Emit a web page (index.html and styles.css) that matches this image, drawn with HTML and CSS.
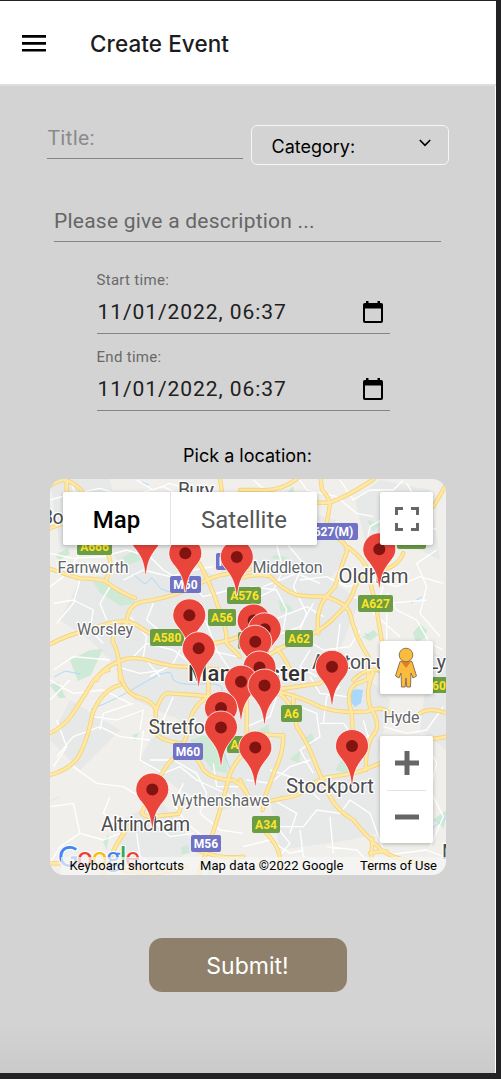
FILE: index.html
```html
<!DOCTYPE html>
<html lang="en">
<head>
<meta charset="utf-8">
<title>Create Event</title>
<link rel="stylesheet" href="styles.css">
</head>
<body>
<div class="app">
  <header class="topbar">
    <svg class="menu" width="24" height="17" viewBox="0 0 24 17"><path d="M0 1.4h24M0 8.4h24M0 15.2h24"/></svg>
    <h1 class="heading">Create Event</h1>
  </header>
  <main class="form">
    <div class="row">
      <div class="field title"><span>Title:</span></div>
      <div class="select"><span>Category:</span><svg width="12" height="8" viewBox="0 0 12 8"><path d="M.8 1 6 6.3 11.2 1"/></svg></div>
    </div>
    <div class="field description"><span>Please give a description ...</span></div>
    <div class="datetime">
      <label>Start time:</label>
      <div class="value"><span><b>11/01/2022,</b> <b>06:37</b></span><svg width="20" height="23" viewBox="0 0 20 23"><path class="ink" fill-rule="evenodd" d="M3 0h2.5v2h9V0H17v2h1.2Q20 2 20 3.800V20.200Q20 22 18.200 22H1.800Q0 22 0 20.200V3.800Q0 2 1.800 2H3zM2 7.500V20h16V7.500z"/></svg></div>
    </div>
    <div class="datetime">
      <label>End time:</label>
      <div class="value"><span><b>11/01/2022,</b> <b>06:37</b></span><svg width="20" height="23" viewBox="0 0 20 23"><path class="ink" fill-rule="evenodd" d="M3 0h2.5v2h9V0H17v2h1.2Q20 2 20 3.800V20.200Q20 22 18.200 22H1.800Q0 22 0 20.200V3.800Q0 2 1.800 2H3zM2 7.500V20h16V7.500z"/></svg></div>
    </div>
    <p class="pick">Pick a location:</p>
    <div class="map">
      <svg class="canvas" width="396" height="396" viewBox="50 479 396 396">
        <defs>
          <g id="pin"><path d="M-.6 38.500C-2 25-5 20-10.500 12.800-13.500 9-16.500 5.500-16.500 0a16.500 16.500 0 0 1 33 0C16.500 5.500 13.500 9 10.500 12.800 5 20 2 25 .6 38.500z"/><circle r="6"/></g>
          <g id="minor">
            <g transform="translate(40 470) scale(.33333)">
              <path d="M30 90 100 70 180 55 260 80 370 50 430 80M90 30 120 110 80 180 110 230M30 250 100 265 190 260 260 240 330 260 370 300 420 330M120 330 100 400 50 460M40 400 100 390 160 420 150 480 190 520M250 330 310 300 390 320 460 300 520 290M340 400 320 450 380 500 430 500M270 440 320 500 310 560 360 620M280 560 320 520 400 540 480 600M40 600 100 560 210 570M230 590 300 610 370 600M470 400 500 460 530 540 570 600M290 30 340 60 390 40 480 70"/>
              <path d="M210 350 180 400 200 450M430 320 490 380 570 360M30 350 70 320 120 250M400 450 460 530 590 560M330 620 400 580 420 540"/>
            </g>
            <g transform="translate(240 470) scale(.33333)">
              <path d="M40 30 100 80 180 90M180 30 200 60 290 80 350 130 400 140M300 30 340 90 390 60 460 60 490 30M110 225 130 300 100 360 60 380M30 350 110 360 140 420 130 480M140 220 190 280 160 350 200 430 180 480M180 330 260 320 320 350 400 330 470 350 540 320 610 340M440 370 470 420 530 450 570 520 610 540M500 40 530 90 500 130 590 180M360 480 330 530 250 540 200 510M210 540 180 590 230 620M30 390 100 450 200 410 250 440M440 430 440 510M300 460 290 540 320 570M590 240 530 280 560 350 540 430 600 500"/>
              <path d="M70 350 170 310 240 340M380 220 390 170 440 140 530 180M100 500 180 470 220 400M330 380 440 400 560 390M430 350 400 430 480 500"/>
            </g>
            <g transform="translate(40 670) scale(.33333)">
              <path d="M30 30 100 70 190 60 270 100M50 260 100 200 180 170 240 200 330 210M160 140 230 150 310 120 300 180M100 290 170 340 250 350 300 380M30 410 100 400 120 490 190 510 240 490M210 380 190 430 250 480M310 180 300 270 370 310 420 290 470 330 600 390M330 270 400 270 470 310 500 370 480 430 540 480 610 490M430 340 400 400 440 460 490 500M350 460 390 500 460 490M120 490 60 530 30 580M90 30 30 90M400 80 360 170 420 190 500 160M50 150 80 230 40 290M520 280 530 350 610 350M290 490 300 560 380 600M180 180 190 130 280 100"/>
            </g>
            <g transform="translate(240 670) scale(.33333)">
              <path d="M110 80 90 140 20 170M180 110 230 130 240 200 180 240 220 310M240 160 310 160 350 210 410 190M300 50 260 80 250 160M370 150 390 220M230 420 190 470 110 470 150 520 100 580M230 420 300 430 330 390 390 430 430 540M180 480 190 560 290 590M270 440 280 550M260 530 350 540 400 590M100 390 170 430 150 490M10 530 90 510 150 550 190 540M90 300 180 330 240 390M560 220 590 280 570 360 610 440 570 530M430 170 500 190 560 180 610 110M440 555 560 540 610 560M20 330 90 340 150 290 210 270M210 20 240 70 320 80M480 560 530 600"/>
            </g>
          </g>
          <g id="major">
            <g transform="translate(40 470) scale(.33333)">
              <path d="M30 48Q55 28 80 30L80 70M76 30Q110 40 130 70M30 175 80 155M540 25 548 80M185 220Q215 260 212 295L198 330M30 296Q80 315 120 325 190 325 205 340 235 365 285 384M630 298 570 310Q540 315 520 322 480 338 440 360 380 385 310 395 262 402 260 460 215 485 218 515 240 550 240 630M30 523Q90 490 150 480 240 440 285 462 350 510 430 520 510 532 600 500M170 630Q185 590 260 566 300 560 340 575 400 592 440 590L540 600M478 280Q520 360 530 400 560 460 560 520L600 560"/>
            </g>
            <g transform="translate(240 470) scale(.33333)">
              <path d="M0 60 60 60Q120 65 170 27M242 27 246 60Q275 90 268 115L260 160M230 98H270Q330 75 400 28M260 190Q340 220 315 260 295 315 285 350L260 378Q225 420 235 490M325 232Q375 270 385 305 390 340 405 390L425 510M0 325Q40 310 90 318 120 355 170 375 200 380 258 380 320 400 330 430 345 500 385 560L385 630M490 250Q470 295 420 300 370 300 345 350 335 395 290 435 260 470 210 495L130 530 60 570M110 535Q150 580 160 630M615 50 580 110M340 630Q380 590 420 602"/>
            </g>
            <g transform="translate(40 670) scale(.33333)">
              <path d="M30 190Q80 165 105 120L150 50Q170 10 205 0M30 315Q85 300 112 265 140 220 158 130 185 60 240 45M240 0Q245 60 290 80 350 95 347 130L348 190Q360 210 420 220 475 260 490 300 520 330 580 330 620 355 630 390M347 125Q365 65 390 70L460 75 520 80M505 0V80Q450 110 445 180 430 240 385 280L340 350 305 430Q330 450 360 437L415 432 430 390M630 235Q570 280 560 350 535 440 515 500L475 615M265 470Q220 530 190 610M30 580H70M470 540Q550 570 610 560M250 600 340 612 440 590M610 0V120"/>
            </g>
            <g transform="translate(240 670) scale(.33333)">
              <path d="M0 405Q90 395 125 385 185 380 205 345L260 322Q350 310 370 300L420 280M130 195Q130 250 105 300L75 380 68 420M70 480Q120 530 120 570V600M80 50Q160 80 170 170 205 220 230 290 250 340 270 380 290 420 340 450 380 500 430 545 480 575 560 580M100 60Q180 80 240 110 290 130 380 125 425 105 450 130M540 130Q570 110 620 130M160 75V110M335 125 338 180M333 120Q315 60 350 40 395 30 400 0M400 10Q375 60 390 110 430 170 395 200 375 240 378 300M20 190 130 197M535 205Q570 212 620 200M397 505 392 600M390 550Q430 540 440 545M0 330 30 390M100 60 240 40Q260 30 260 0M20 0V190"/>
            </g>
          </g>
        </defs>
        <rect class="land" x="50" y="479" width="396" height="396"/>
        <path class="urban" d="M50 479 110 479 115 500 180 505 190 560 220 580 230 530 300 510 335 520 350 550 330 580 360 600 340 650 370 680 390 700 378 760 420 790 390 830 350 840 280 850 270 800 220 810 180 790 140 760 150 740 180 720 135 700 110 660 90 640 60 620 80 580 130 570 150 610 110 550 60 550zM355 500 380 480 430 490 440 560 400 540 370 560zM80 770 50 740 70 700 120 730zM430 650 446 660V750L420 730zM120 820 160 800 195 845 160 875 120 860z"/>
        <g class="park">
          <path d="M92 580 120 588 137 603 121 606 100 593zM70 660 90 650 103 649 91 675 78 681zM55 555 68 548 70 554 59 560zM103 842 109 834 107 850zM190 740 205 735 225 748 228 773 212 770zM132 735 139 733 135 741zM50 685 58 682 66 698 59 698zM285 495 293 486 295 500zM413 633 420 624 427 630 425 638 416 642zM278 600 290 606 293 611 281 613zM271 557 277 555 288 558 281 563zM335 770 344 756 350 762 347 774zM289 759 301 750 299 763zM433 820 447 810 444 828zM306 737 312 733 315 742 308 747zM362 637 374 630 378 635 370 641zM122 558 134 550 141 560 128 565zM255 732 269 724 270 744 261 751zM181 847 188 845 190 853 182 855zM214 599 226 614 220 620zM367 520 380 524 373 532zM50 801 62 795 54 800zM206 860 220 865 209 875z"/>
        </g>
        <path class="lake" d="M350 692 356 689 363 690 361 703 355 707 350 701z"/>
        <path class="water" d="M134 575 145 584 152 578 161 589 170 592M142 482 149 485M91 709Q112 702 142 684T172 676 202 684 217 698M54 677 65 671 80 674M292 671 298 678M214 728 232 774M331 699 338 684M61 771 75 761 80 750M365 633 369 637M411 603 422 597M431 829 447 817"/>
        <use href="#minor" class="minor"/>
        <use href="#major" class="casing"/>
        <use href="#major" class="core"/>
        <g class="badge green">
          <rect x="77" y="539" width="35" height="16" rx="2"/><rect x="227" y="587" width="34" height="17" rx="2"/><rect x="208" y="609" width="28" height="17" rx="2"/><rect x="150" y="629" width="34" height="17" rx="2"/><rect x="285" y="630" width="28" height="17" rx="2"/><rect x="358" y="595" width="35" height="17" rx="2"/><rect x="397" y="532" width="29" height="17" rx="2"/><rect x="281" y="705" width="21" height="17" rx="2"/><rect x="227" y="736" width="24" height="17" rx="2"/><rect x="252" y="816" width="28" height="17" rx="2"/><rect x="430" y="677" width="20" height="16" rx="2"/><rect x="238" y="632" width="20" height="17" rx="2"/>
          <text x="94.500" y="551">A666</text><text x="244.500" y="600">A576</text><text x="222" y="622">A56</text><text x="167" y="642">A580</text><text x="299" y="643">A62</text><text x="375.500" y="608">A627</text><text x="411.500" y="545">A672</text><text x="291.500" y="718">A6</text><text x="238" y="749">A5</text><text x="266" y="829">A34</text><text x="439" y="690">60</text>
        </g>
        <g class="badge blue">
          <rect x="170" y="576" width="31" height="17" rx="2"/><rect x="216" y="553" width="30" height="17" rx="2"/><rect x="300" y="523" width="58" height="17" rx="2"/><rect x="173" y="743" width="30" height="17" rx="2"/><rect x="191" y="835" width="30" height="17" rx="2"/>
          <text x="185.500" y="589">M60</text><text x="231" y="566">M66</text><text x="329.500" y="536">A627(M)</text><text x="188" y="756">M60</text><text x="206" y="848">M56</text>
        </g>
        <g class="place">
          <text class="big" x="178" y="496.500" textLength="36">Bury</text>
          <text class="big" x="41" y="524" textLength="53">Bolton</text>
          <text x="57.500" y="573" textLength="71">Farnworth</text>
          <text x="77" y="635" textLength="56">Worsley</text>
          <text x="252.500" y="573" textLength="70">Middleton</text>
          <text class="big" x="338.500" y="582.500" textLength="70" lengthAdjust="spacingAndGlyphs">Oldham</text>
          <text class="big" x="312" y="668.500" textLength="134">Ashton-under-Ly</text>
          <text class="city" x="188" y="681" textLength="120">Manchester</text>
          <text class="big" x="148.500" y="734" textLength="73">Stretford</text>
          <text x="383.500" y="723" textLength="36">Hyde</text>
          <text x="171.500" y="806" textLength="98">Wythenshawe</text>
          <text class="big" x="286" y="793" textLength="88" lengthAdjust="spacingAndGlyphs">Stockport</text>
          <text class="big" x="101" y="830.500" textLength="89">Altrincham</text>
          <text class="big" x="442" y="859">M</text>
        </g>
        <text class="brand" x="58" y="867" textLength="82"><tspan fill="#4285f4">G</tspan><tspan fill="#ea4335">o</tspan><tspan fill="#fbbc05">o</tspan><tspan fill="#4285f4">g</tspan><tspan fill="#34a853">l</tspan><tspan fill="#ea4335">e</tspan></text>
        <g class="pins">
          <use href="#pin" x="145.700" y="536"/><use href="#pin" x="379.300" y="549.300"/><use href="#pin" x="185.300" y="553.300"/><use href="#pin" x="236.800" y="557"/>
          <use href="#pin" x="189.300" y="615.300"/><use href="#pin" x="253.700" y="620.500"/><use href="#pin" x="264.700" y="629.300"/><use href="#pin" x="255.300" y="641.700"/>
          <use href="#pin" x="198.700" y="648.300"/><use href="#pin" x="332" y="666.800"/><use href="#pin" x="259.500" y="667.500"/><use href="#pin" x="241" y="681.700"/>
          <use href="#pin" x="264.500" y="685.500"/><use href="#pin" x="221" y="708"/><use href="#pin" x="221" y="727.500"/><use href="#pin" x="352" y="746"/>
          <use href="#pin" x="255.300" y="747.500"/><use href="#pin" x="152.300" y="789.500"/>
        </g>
        <rect class="legal" x="61" y="857" width="385" height="18"/>
        <g class="terms"><text x="69.500" y="870" textLength="114.500">Keyboard shortcuts</text><text x="200" y="870" textLength="143.500">Map data ©2022 Google</text><text x="360" y="870" textLength="77">Terms of Use</text></g>
      </svg>
      <div class="controls">
        <div class="types"><span class="on">Map</span><span>Satellite</span></div>
        <div class="tools">
          <div class="tool"><svg width="26" height="26" viewBox="0 0 26 26"><path class="grey" d="M2.500 9V2.500H9M17 2.500h6.500V9M23.500 17v6.500H17M9 23.500H2.500V17"/></svg></div>
          <div class="tool person"><svg width="24" height="42" viewBox="0 0 24 42"><path class="body" d="M6 14.500Q12 12.500 18 14.500L22.500 29 19 31 17 26 16.500 40H12.800L12 31 11.200 40H7.500L7 26 5 31 1.500 29z"/><path class="scarf" d="M7 14.500h10L12 21z"/><circle class="body" cx="12" cy="8" r="6.800"/></svg></div>
          <div class="zoom"><svg width="24" height="24" viewBox="0 0 24 24"><path class="grey thick" d="M0 12h24M12 0v24"/></svg><i></i><svg width="24" height="24" viewBox="0 0 24 24"><path class="grey thick" d="M0 12h24"/></svg></div>
        </div>
      </div>
    </div>
    <button class="submit">Submit!</button>
  </main>
</div>
</body>
</html>
```
FILE: styles.css
```css
* { box-sizing: border-box; }
body { margin: 0; background: #222224; font-family: Inter, sans-serif; }
.app { width: 496px; height: 1079px; border-top: 1px solid #222224; border-bottom: 6px solid #222224; background: #fff; display: flex; flex-direction: column; }
.topbar { height: 85px; border-bottom: 2px solid #dedede; display: flex; align-items: center; gap: 44px; padding: 2px 0 0 22px; flex: none; }
.menu { stroke: #000; stroke-width: 2.6; }
.heading { margin: 0; font-size: 22.5px; line-height: 28px; font-weight: 500; letter-spacing: .08px; color: #1c1c1e; }
.form { width: 495px; flex: 1; background: linear-gradient(#d3d3d3 95%, #cacaca); padding-top: 39px; display: flex; flex-direction: column; align-items: center; }
.row { width: 402px; display: flex; justify-content: space-between; }
.field { border-bottom: 1px solid #858585; font: 21px/24px Roboto, sans-serif; letter-spacing: .23px; white-space: nowrap; }
.title { width: 196px; height: 34px; padding: 1px 0 0 1px; color: #8b8b8b; }
.select { width: 198px; height: 40px; border: 1.500px solid #f6f6f6; border-radius: 6px; padding: 3px 17px 0 20px; display: flex; justify-content: space-between; align-items: center; font-size: 18px; }
.select svg { fill: none; stroke: #000; stroke-width: 1.700; margin-bottom: 7px; }
.description { width: 387px; height: 33px; margin-top: 44px; color: #666; }
.datetime { width: 293px; height: 63px; margin: 29px 9px 0 0; border-bottom: 1px solid #858585; font-family: Roboto, sans-serif; }
.datetime + .datetime { margin-top: 14px; }
.datetime label { display: block; font-size: 15px; line-height: 19px; letter-spacing: .3px; color: #696969; }
.value { display: flex; justify-content: space-between; align-items: center; padding: 0 7px 0 1px; height: 44px; font-size: 21px; letter-spacing: .93px; color: #202020; }
.value b { font-weight: 400; }
.pick { margin: 33px 0 12px; font-size: 18px; line-height: 23px; }
.map { position: relative; width: 396px; height: 396px; margin-left: 1px; border-radius: 14px; overflow: hidden; }
.canvas { display: block; font-family: Roboto, sans-serif; }
.land { fill: #f0efeb; }
.urban { fill: #e7e8e8; }
.park { fill: #ceead6; }
.lake { fill: #a8d8fc; }
.water { fill: none; stroke: #a8d8fc; stroke-width: .9; }
.minor { fill: none; stroke: #fff; stroke-width: 4; stroke-linejoin: round; }
.casing, .core { fill: none; stroke-linejoin: round; stroke-linecap: round; }
.casing { stroke: #f3d27a; stroke-width: 13; }
.core { stroke: #fee8a3; stroke-width: 8; }
.badge { font-size: 12px; font-weight: 700; text-anchor: middle; }
.green rect { fill: #6b9d47; }
.green text { fill: #ffe426; }
.blue rect { fill: #7073c5; }
.blue text { fill: #fff; }
.place { fill: #62666a; stroke: #fff; stroke-width: 2.5; paint-order: stroke; font-size: 16px; }
.big { font-size: 19.500px; fill: #4b4d50; }
.city { font-size: 22px; font-weight: 500; fill: #333; }
.pins { fill: #e9453b; stroke: #fff; stroke-width: .8; }
#pin circle { fill: #811411; stroke: none; }
.brand { font: 500 28px Lato, sans-serif; stroke: #fff; stroke-width: 2; paint-order: stroke; }
.legal { fill: #f5f5f5; fill-opacity: .72; }
.terms { font-size: 13px; fill: #000; }
.controls { position: absolute; inset: 13px 13px auto 13px; display: flex; justify-content: space-between; align-items: flex-start; font-family: Roboto, sans-serif; }
.types { display: flex; height: 53px; font-size: 24px; line-height: 56px; color: #565656; box-shadow: 0 1px 4px #0004; border-radius: 2px; background: #fff; }
.types span { width: 146px; text-align: center; }
.types .on { width: 108px; color: #000; font-weight: 500; border-right: 1px solid #e4e4e4; }
.tools { width: 53px; }
.tool, .zoom { background: #fff; border-radius: 2px; box-shadow: 0 1px 4px #0004; display: flex; align-items: center; justify-content: center; }
.tool { height: 53px; }
.person { margin: 96px 0 42px; padding-right: 2px; }
.zoom { height: 107px; flex-direction: column; justify-content: space-between; padding: 15px 0 14px; }
.zoom i { width: 39px; height: 1px; background: #e3e3e3; }
.grey { fill: none; stroke: #666; stroke-width: 3; }
.thick { stroke-width: 5; }
.body { fill: #fbbc3d; stroke: #7a6a50; stroke-width: .9; }
.scarf { fill: #e07c2c; }
.submit { width: 198px; height: 54px; margin-top: 63px; border: 0; border-radius: 13px; background: #8f806b; color: #fff; font: 23px Inter, sans-serif; padding: 1px 0 0; }
```
